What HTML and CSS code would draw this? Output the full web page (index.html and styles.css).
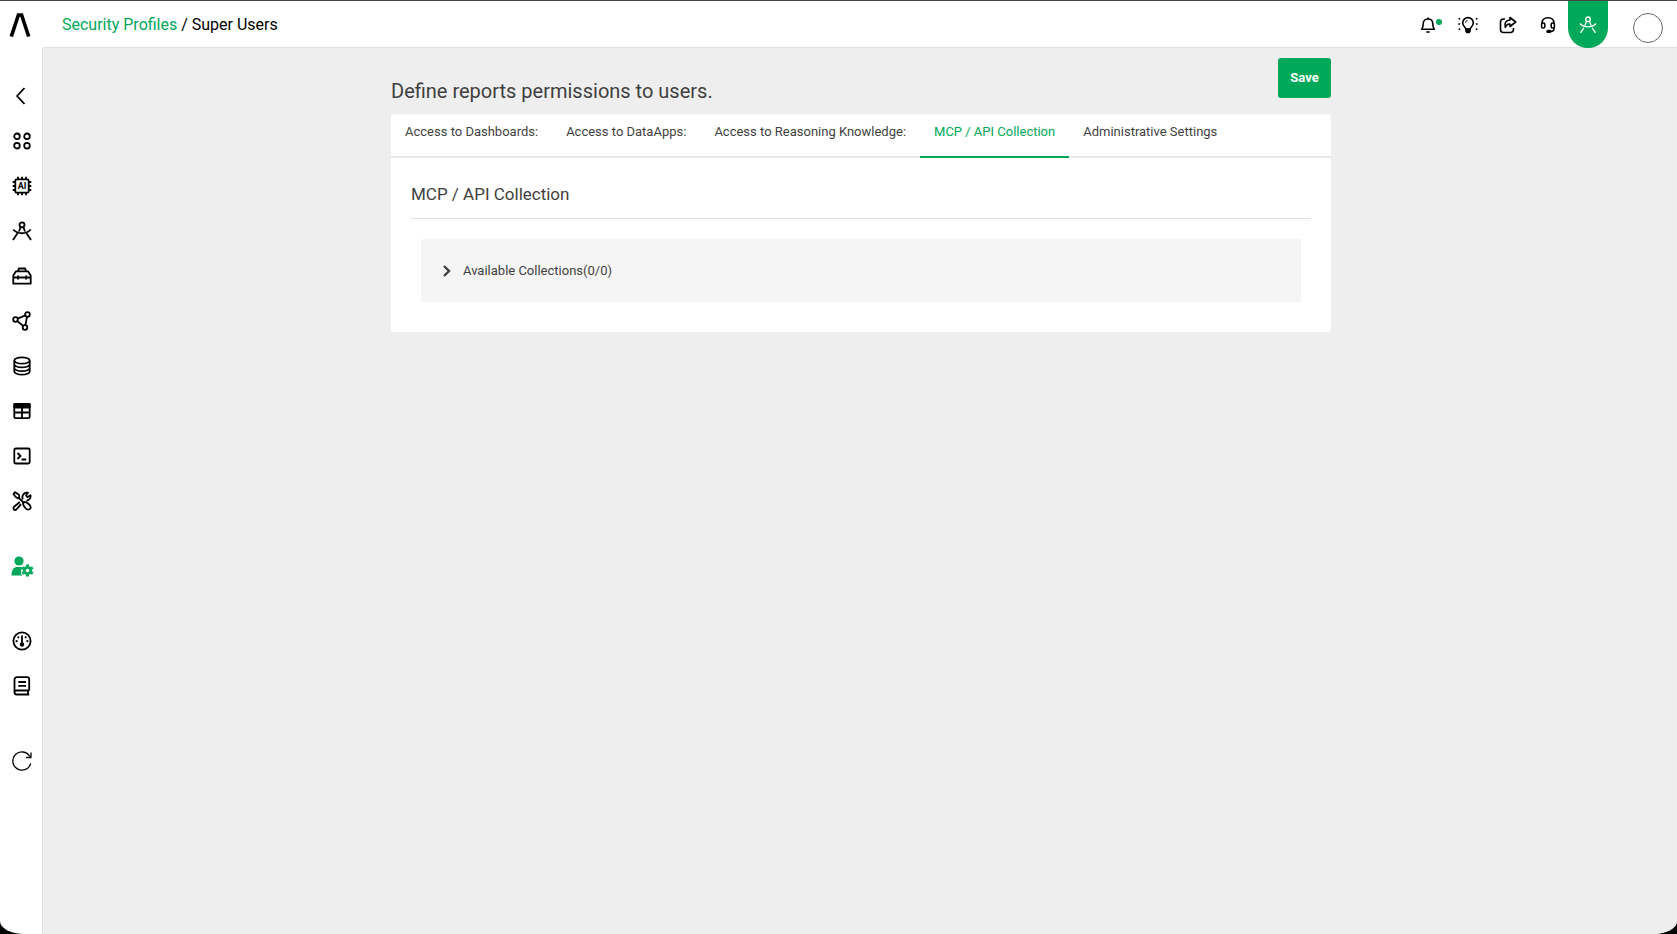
FILE: index.html
```html
<!DOCTYPE html>
<html lang="en">
<head>
<meta charset="utf-8">
<meta name="viewport" content="width=device-width, initial-scale=1">
<title>Super Users</title>
<link rel="stylesheet" href="styles.css">
</head>
<body>
<div class="app">
  <header class="header">
    <a class="logo" href="#" aria-label="Home">
      <svg width="22" height="24" viewBox="0 0 22 24"><path d="M2.3 23.5 9.4 2h3.2l7.1 21.5" fill="none" stroke="#000" stroke-width="3.6"/></svg>
    </a>
    <nav class="breadcrumb" aria-label="Breadcrumb"><a href="#">Security Profiles</a> / <span>Super Users</span></nav>
    <div class="actions">
      <button class="action" aria-label="Notifications">
        <svg class="icon" viewBox="0 0 20 20"><path d="M3.6 14.2c1.4-1.5 1.6-3 1.6-5.2 0-3.2 2-5 4.8-5s4.800 1.800 4.800 5c0 2.200.2 3.700 1.600 5.200z"/><path d="M8.300 17h3.400M10 2.500V4"/></svg>
        <span class="dot"></span>
      </button>
      <button class="action" aria-label="Tips">
        <svg class="icon" viewBox="0 0 20 20"><path d="M8 14.500c0-2-3.300-3.300-3.300-6.600a5.300 5.300 0 0 1 10.600 0c0 3.300-3.300 4.600-3.300 6.600z"/><path d="M8 14h4v2.500l-1 1H9l-1-1z" fill="currentColor"/><path d="M7.500 7.500Q7.800 5.800 9.500 5.500" stroke-width="1"/><path d="M.6 3.500l1.600.6M.3 9h1.800M.6 14.500l1.600-.6M19.400 3.500l-1.600.6M19.700 9h-1.800M19.400 14.500l-1.600-.6"/></svg>
      </button>
      <button class="action" aria-label="Share">
        <svg class="icon" viewBox="0 0 20 20"><path d="M7 4H5.500a3 3 0 0 0-3 3v7.500a3 3 0 0 0 3 3h7a3 3 0 0 0 3-3V13"/><path d="M12 2.500 17.700 7 12 11.500V9c-2.300-.2-3.800.8-4.700 3.300C6 8.200 8 5.200 12 5z"/></svg>
      </button>
      <button class="action" aria-label="Support">
        <svg class="icon" viewBox="0 0 20 20"><path d="M4 8.500C4 4.800 6.500 2.700 10 2.700s6 2.100 6 5.800M16 12v1.500c0 2-1.300 3-3.500 3"/><rect x="3.600" y="8" width="3.200" height="5" rx="1.300"/><rect x="13.200" y="8" width="3.200" height="5" rx="1.300"/><rect x="9" y="15.500" width="3.600" height="1.800" rx=".9" fill="currentColor"/></svg>
      </button>
      <button class="action action-active" aria-label="Design">
        <svg class="icon" viewBox="0 0 20 20"><circle cx="10" cy="4.300" r="2.300"/><path d="M8.500 6.300 7 10.500M11.500 6.300l1.500 4.200M5.800 12.800l-3.300 5M14.200 12.800l3.300 5M2 8.500c4 4.500 12 4.500 16 0"/></svg>
      </button>
      <button class="avatar" aria-label="Account"></button>
    </div>
  </header>
  <div class="body">
    <nav class="sidebar" aria-label="Main">
      <div class="group">
        <a href="#" aria-label="Back"><svg class="icon" viewBox="0 0 20 20"><path d="M12.500 2 5 10l7.500 8" stroke-width="1.800"/></svg></a>
        <a href="#" aria-label="Apps"><svg class="icon" viewBox="0 0 20 20"><circle cx="5" cy="5.300" r="2.800"/><circle cx="15" cy="5.300" r="2.800"/><circle cx="5" cy="14.700" r="2.800"/><circle cx="15" cy="14.700" r="2.800"/></svg></a>
        <a href="#" aria-label="AI"><svg class="icon" viewBox="0 0 20 20"><rect x="3.300" y="3.300" width="13.400" height="13.400" rx="1.500"/><path d="M6 3V.7M10 3V.7M14 3V.7M6 19.300V17M10 19.300V17M14 19.300V17M3 6H.7M3 10H.7M3 14H.7M19.300 6H17M19.300 10H17M19.300 14H17"/><text x="10" y="13.200" class="chip">AI</text></svg></a>
        <a href="#" aria-label="Design"><svg class="icon" viewBox="0 0 20 20"><circle cx="10" cy="3.800" r="2.500"/><path d="M8.600 6 7 10.500M11.400 6l1.600 4.500M5.500 12.300 1 19M14.500 12.300 19 19M1.200 8.500c4.500 5 13.100 5 17.600 0"/></svg></a>
        <a href="#" aria-label="Toolbox"><svg class="icon" viewBox="0 0 20 20"><path d="M1.300 9.500 4 5.300h12l2.700 4.200v8.200H1.300zM6 5.300l.8-2.800h6.400l.8 2.800M1.300 11.500h17.400M6 9.500v4M14 9.500v4"/></svg></a>
        <a href="#" aria-label="Graph"><svg class="icon" viewBox="0 0 20 20"><circle cx="3.500" cy="8.500" r="2.300"/><circle cx="15.500" cy="3.500" r="2.300"/><circle cx="13" cy="16.500" r="2.300"/><path d="m5.700 7.600 7.600-3.200M5.300 10.100l5.900 4.900M15 5.900l-1.600 8.300"/></svg></a>
        <a href="#" aria-label="Data"><svg class="icon" viewBox="0 0 20 20"><ellipse cx="10" cy="4.500" rx="7.700" ry="3.200"/><path d="M2.300 4.500v11c0 1.800 3.500 3.200 7.700 3.200s7.700-1.400 7.700-3.200v-11M2.300 8.200c0 1.800 3.500 3.200 7.700 3.200s7.700-1.400 7.700-3.200M2.300 12c0 1.800 3.500 3.200 7.700 3.200s7.700-1.400 7.700-3.200"/></svg></a>
        <a href="#" aria-label="Tables"><svg class="icon" viewBox="0 0 20 20"><rect x="2.300" y="2.800" width="15.400" height="14.400" rx="1.500"/><path d="M2.300 3h15.400v3.500H2.300z" fill="currentColor"/><path d="M10 6v11M2.300 11.500h15.400"/></svg></a>
        <a href="#" aria-label="Console"><svg class="icon" viewBox="0 0 20 20"><rect x="2.300" y="2.500" width="15.400" height="15" rx="1.500"/><path d="m5.500 7 3 3-3 3M9.500 13.500h4.700"/></svg></a>
        <a href="#" aria-label="Tools"><svg class="icon" viewBox="0 0 20 20"><path d="M1.500 3 3 1.200l4 2.600.3 2.500-1.600 1L3.500 5.800zM6.800 6.800l4.700 4.700M11 12.500l1.700-1.700c2 0 6.300 4 6 5.500-.2 1.500-1.200 2.300-2.400 2.400C14.500 19 11 14.500 11 12.500zM7.800 11l-5.700 4.800c-1.600 2 .4 4 2.300 2.700L9 13.200M10.800 8.500C9.500 5 11.500 1.500 15 1.500l1 .3-2 2.700 1.500 1.700 3-2c.6 3-1.500 5.500-4 5.300"/></svg></a>
      </div>
      <div class="group">
        <a class="current" href="#" aria-label="Users"><svg class="users" viewBox="0 0 24 22" fill="currentColor"><circle cx="9" cy="6" r="4.600"/><path d="M1.500 20.500c0-6 2.500-8.500 6-8.500h3c1 0 1.800.3 2.500.7a6.500 6.500 0 0 0-1 7.800z"/><g transform="translate(17.500 15.500)"><circle r="3.200" fill="none" stroke="currentColor" stroke-width="2.800"/><path d="M0-4v-2M0 4v2M3.500-2l1.800-1M-3.500 2l-1.800 1M3.500 2l1.800 1M-3.500-2l-1.800-1" stroke="currentColor" stroke-width="3"/></g></svg></a>
      </div>
      <div class="group">
        <a href="#" aria-label="Usage"><svg class="icon" viewBox="0 0 20 20"><circle cx="10" cy="10" r="8.600"/><path d="M10 4.500v8"/><circle cx="10" cy="13.500" r="1.300" fill="currentColor"/><g fill="currentColor" stroke="none"><circle cx="4.600" cy="10.200" r="1.100"/><circle cx="15.400" cy="10.200" r="1.100"/><circle cx="6.300" cy="6.300" r="1.100"/><circle cx="13.700" cy="6.300" r="1.100"/></g></svg></a>
        <a href="#" aria-label="Docs"><svg class="icon" viewBox="0 0 20 20"><path d="M17.200 14.500V3a1.800 1.800 0 0 0-1.800-1.800H5A2.500 2.500 0 0 0 2.500 3.700v12.500c0 1.500 1 2.300 2.300 2.300h12.400M2.500 16c0-1 1-1.500 2-1.500h12.700M16 14.500v4M6.300 6h7.700M6.300 9.800h7.700"/></svg></a>
      </div>
      <div class="group">
        <a href="#" aria-label="Refresh"><svg class="icon" viewBox="0 0 20 20"><path d="M18.700 12.300A9.100 9.100 0 1 1 17.800 5.500M19 1.500v5h-5" stroke-width="1.300"/></svg></a>
      </div>
    </nav>
    <main class="main">
      <div class="content">
        <div class="title-row">
          <h1>Define reports permissions to users.</h1>
          <button class="save">Save</button>
        </div>
        <section class="card">
          <div class="tabs" role="tablist">
            <button role="tab">Access to Dashboards:</button>
            <button role="tab">Access to DataApps:</button>
            <button role="tab">Access to Reasoning Knowledge:</button>
            <button role="tab" class="selected" aria-selected="true">MCP / API Collection</button>
            <button role="tab">Administrative Settings</button>
          </div>
          <div class="panel">
            <h2>MCP / API Collection</h2>
            <button class="collection" aria-expanded="false">
              <svg width="10" height="14" viewBox="0 0 10 14"><path d="m2 2 5 5-5 5" fill="none" stroke="currentColor" stroke-width="2.400"/></svg>
              Available Collections(0/0)
            </button>
          </div>
        </section>
      </div>
    </main>
  </div>
</div>
</body>
</html>
```
FILE: styles.css
```css
* { box-sizing: border-box; }

body {
  margin: 0;
  background: #000;
  color: #3f3f3f;
  font-family: Roboto, "Liberation Sans", sans-serif;
  font-size: 14px;
}

button {
  border: 0;
  padding: 0;
  background: none;
  color: inherit;
  font: inherit;
  cursor: pointer;
}

a { color: inherit; text-decoration: none; }
svg { display: block; flex: none; }

.app {
  min-height: 100vh;
  display: flex;
  flex-direction: column;
  background: #fff;
  border-radius: 0 0 24px 24px / 0 0 13px 13px;
  overflow: hidden;
}

.icon {
  width: 20px;
  height: 20px;
  fill: none;
  stroke: currentColor;
  stroke-width: 1.6;
  stroke-linejoin: round;
}

.header {
  height: 48px;
  display: flex;
  border-top: 1px solid #444;
  color: #000;
}

.logo { padding: 12px 0 0 9px; width: 43px; }

.breadcrumb {
  flex: 1;
  padding-left: 19px;
  border-bottom: 1px solid #e0e0e0;
  font-size: 16px;
  line-height: 47px;
}

.breadcrumb a { color: #00a859; }

.actions {
  display: flex;
  padding-right: 14px;
  background: linear-gradient(#e0e0e0, #e0e0e0) bottom / 100% 1px no-repeat;
}

.action {
  position: relative;
  width: 40px;
  display: flex;
  align-items: center;
  justify-content: center;
}

.dot {
  position: absolute;
  top: 18px;
  right: 6px;
  width: 6px;
  height: 6px;
  border-radius: 50%;
  background: #00a859;
}

.action-active {
  background: #00a859;
  color: #fff;
  border-radius: 0 0 20px 20px;
}

.action-active .icon { stroke-width: 1.3; }

.avatar {
  width: 30px;
  height: 30px;
  margin: 12px 0 0 25px;
  border: 1px solid #666;
  border-radius: 50%;
}

.body { flex: 1; display: flex; }

.sidebar {
  width: 43px;
  padding: 25px 0 0 2px;
  display: flex;
  flex-direction: column;
  gap: 30px;
  border-right: 1px solid #e0e0e0;
  color: #000;
}

.sidebar .icon { stroke-width: 1.8; }

.group:nth-child(2) { margin-top: -10px; }

.group a {
  height: 45px;
  display: flex;
  align-items: center;
  justify-content: center;
}

.group .current { color: #00a859; }
.users { width: 24px; height: 22px; }

.chip {
  fill: currentColor;
  stroke: none;
  font-size: 9px;
  font-weight: 700;
  text-anchor: middle;
}

.main {
  flex: 1;
  padding: 10px 20px 20px 22px;
  background: #eee;
}

.content { max-width: 940px; margin: 0 auto; }

.title-row {
  display: flex;
  justify-content: space-between;
  align-items: flex-start;
  height: 56px;
}

h1 {
  margin: 20px 0 0;
  font-size: 20px;
  font-weight: 400;
  line-height: 26px;
}

.save {
  width: 53px;
  height: 40px;
  padding-bottom: 2px;
  border-radius: 3px;
  background: #00a859;
  color: #fff;
  font-size: 13px;
  font-weight: 700;
}

.card { background: #fff; border-radius: 3px; }

.tabs {
  display: flex;
  border-bottom: 2px solid #e9e9e9;
}

.tabs button {
  height: 44px;
  margin-bottom: -2px;
  padding: 0 14px 8px;
  border-bottom: 2px solid transparent;
  font-size: 13px;
}

.tabs .selected { border-color: #00a859; color: #00a859; }

.panel { padding: 20px 20px 30px; }

h2 {
  margin: 0 0 20px;
  padding: 4px 0 12px;
  border-bottom: 1px solid #e0e0e0;
  font-size: 17px;
  font-weight: 400;
  line-height: 24px;
}

.collection {
  width: calc(100% - 20px);
  height: 63px;
  margin: 0 10px;
  padding-left: 21px;
  display: flex;
  align-items: center;
  gap: 11px;
  border-radius: 3px 3px 0 0;
  background: #f5f5f5;
  font-size: 13px;
}
```
